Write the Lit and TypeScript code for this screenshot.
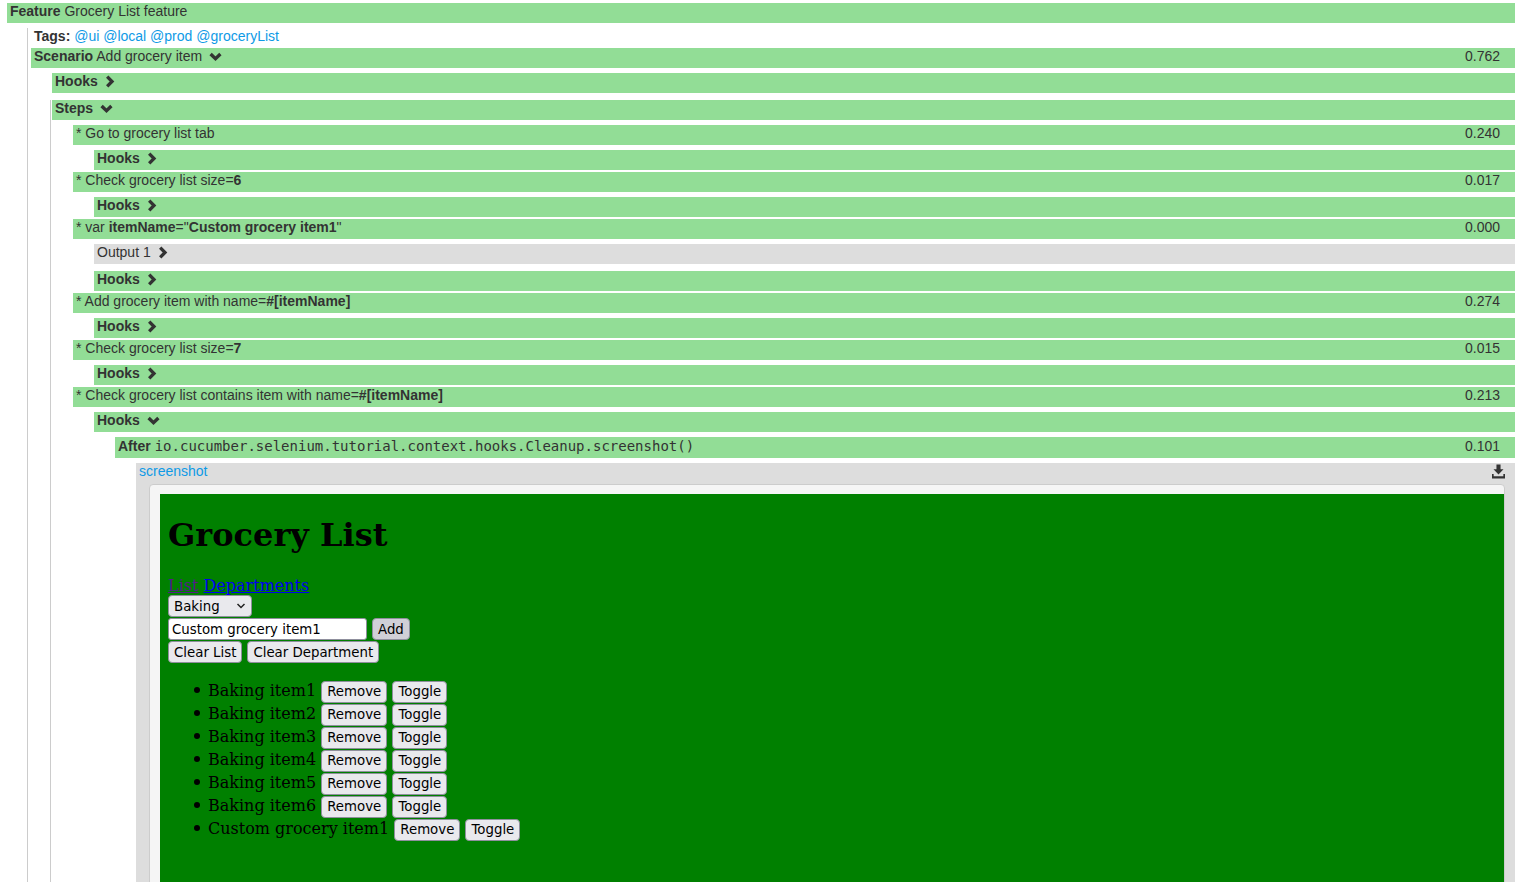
import { LitElement, html, css, nothing } from "lit";
import { customElement } from "lit/decorators.js";

const right = html`<svg class="chev r" viewBox="0 0 10 13" width="10" height="13"><polyline points="2.2,1.6 7,6.5 2.2,11.4" fill="none" stroke="#333" stroke-width="3.3"/></svg>`;
const down = html`<svg class="chev d" viewBox="0 0 13 10" width="13" height="10"><polyline points="1.6,2 6.5,6.8 11.4,2" fill="none" stroke="#333" stroke-width="3.3"/></svg>`;

interface Step { text: unknown; time: string; output?: boolean }

const steps: Step[] = [
  { text: html`* Go to grocery list tab`, time: "0.240" },
  { text: html`* Check grocery list size=<b>6</b>`, time: "0.017" },
  { text: html`* var <b>itemName</b>="<b>Custom grocery item1</b>"`, time: "0.000", output: true },
  { text: html`* Add grocery item with name=<b>#[itemName]</b>`, time: "0.274" },
  { text: html`* Check grocery list size=<b>7</b>`, time: "0.015" },
];

const items = ["Baking item1", "Baking item2", "Baking item3", "Baking item4", "Baking item5", "Baking item6", "Custom grocery item1"];

@customElement("app-root")
export class AppRoot extends LitElement {
  static styles = css`
    :host {
      display: block;
      height: 882px;
      overflow: hidden;
      font: 14px/20px "Liberation Sans", Arial, sans-serif;
      color: #333;
      background: #fff;
    }
    b { font-weight: 700; }
    a.tag { color: #0e9ae6; text-decoration: none; }
    .report { margin: 0 11px 0 7px; padding-top: 3px; }
    .bar {
      display: flex;
      justify-content: space-between;
      height: 20px;
      line-height: 17px;
      background: #92dd96;
      padding: 0 15px 0 3px;
    }
    .bar.grey { background: #ddd; }
    .bar .label { display: flex; align-items: flex-start; white-space: pre; }
    .chev { margin-left: 7px; }
    .chev.r { margin-top: 2px; }
    .chev.d { margin-top: 4px; }
    .tree { margin: 5px 0 0 20px; border-left: 1px solid #ccc; padding-left: 3px; }
    .tags { padding-left: 3px; height: 20px; line-height: 17px; }
    .sec { margin: 5px 0 2px; }
    .hooks-top { margin-left: 21px; }
    .steps-sec { margin-left: 19px; border-left: 1px solid #ccc; padding-left: 1px; margin-top: 7px; }
    .steps-body { margin-left: 21px; padding-top: 5px; }
    .sub { margin-left: 21px; }
    .out { margin-bottom: 7px; }
    .after { margin-bottom: 0; }
    .after .bar { height: 21px; line-height: 18px; }
    .mono { font-family: "DejaVu Sans Mono", monospace; font-size: 14px; margin-left: 4px; }
    .embed { margin: 5px 0 0 21px; background: #ddd; height: 500px; }
    .embed-head { display: flex; justify-content: space-between; height: 21px; line-height: 17px; padding: 0 10px 0 3px; }
    .dl { margin-top: 1px; }
    .pre {
      margin-left: 13px;
      margin-right: 10px;
      background: #f5f5f5;
      border: 1px solid #ccc;
      border-radius: 4px;
      padding: 9px 0 0 10px;
    }
    .page {
      height: 480px;
      background: #008000;
      color: #000;
      padding: 0 8px;
      font: 16px "DejaVu Serif", serif;
      overflow: hidden;
    }
    h1 { font-size: 32px; font-weight: 700; margin: 23.44px 0 21.44px; line-height: 37px; }
    .page a { text-decoration: underline; }
    .visited { color: #551a8b; }
    .link { color: #0000ee; }
    .nav { height: 19px; }
    .line { height: 23px; display: flex; align-items: center; gap: 5px; }
    button, input, .sel {
      box-sizing: border-box;
      font: 13.33px "DejaVu Sans", sans-serif;
      color: #000;
      height: 22px;
      border: 1px solid #8f8f9d;
      border-radius: 4px;
      background: #e9e9ed;
      padding: 0 5px;
      margin: 0;
    }
    button.hot { background: #d0d0d7; }
    input { background: #fff; width: 199px; padding: 0 3px; border-radius: 3px; }
    .selwrap { position: relative; display: inline-block; height: 22px; }
    .sel { appearance: none; width: 84px; display: block; }
    .selwrap svg { position: absolute; right: 6px; top: 8px; pointer-events: none; }
    ul { margin: 16px 0; padding: 0 0 0 40px; list-style: none; }
    li { height: 23px; line-height: 22px; position: relative; }
    li::before {
      content: "";
      position: absolute;
      left: -14.5px;
      top: 7px;
      width: 6px;
      height: 6px;
      border-radius: 50%;
      background: #000;
    }
    li button { vertical-align: top; margin-top: 1px; }
  `;

  private hooks(open = false) {
    return html`<div class="sec sub">
      <div class="bar"><span class="label"><b>Hooks</b>${open ? down : right}</span></div>
      ${open ? this.after() : nothing}
    </div>`;
  }

  private after() {
    return html`<div class="sub after sec">
      <div class="bar">
        <span class="label"><b>After</b><span class="mono">io.cucumber.selenium.tutorial.context.hooks.Cleanup.screenshot()</span></span>
        <span>0.101</span>
      </div>
      <div class="embed">
        <div class="embed-head">
          <a class="tag" href="#">screenshot</a>
          <svg class="dl" width="13" height="15" viewBox="0 0 14 15"><path fill="#333" d="M4.8 0h4.4v5h3.2L7 10.6 1.6 5h3.2z"/><path fill="#333" d="M0 10.2h1.8v2.3h10.4v-2.3H14V15H0z"/></svg>
        </div>
        <div class="pre">${this.page()}</div>
      </div>
    </div>`;
  }

  private page() {
    return html`<div class="page">
      <h1>Grocery List</h1>
      <div class="nav"><a class="visited" href="#">List</a> <a class="link" href="#">Departments</a></div>
      <div class="line">
        <span class="selwrap">
          <select class="sel"><option>Baking</option></select>
          <svg width="10" height="6" viewBox="0 0 10 6"><polyline points="1.5,1 5,4.5 8.5,1" fill="none" stroke="#222" stroke-width="1.5"/></svg>
        </span>
      </div>
      <div class="line"><input .value=${"Custom grocery item1"} /><button class="hot">Add</button></div>
      <div class="line"><button>Clear List</button><button>Clear Department</button></div>
      <ul>
        ${items.map((i) => html`<li>${i} <button>Remove</button> <button>Toggle</button></li>`)}
      </ul>
    </div>`;
  }

  render() {
    return html`<div class="report">
      <div class="bar"><span class="label"><b>Feature</b> Grocery List feature</span></div>
      <div class="tree">
        <div class="tags"><b>Tags:</b> <a class="tag" href="#">@ui</a> <a class="tag" href="#">@local</a> <a class="tag" href="#">@prod</a> <a class="tag" href="#">@groceryList</a></div>
        <div class="bar">
          <span class="label"><b>Scenario</b> Add grocery item${down}</span>
          <span>0.762</span>
        </div>
        <div class="sec hooks-top"><div class="bar"><span class="label"><b>Hooks</b>${right}</span></div></div>
        <div class="steps-sec">
          <div class="bar"><span class="label"><b>Steps</b>${down}</span></div>
          <div class="steps-body">
            ${steps.map((s) => html`
              <div class="bar"><span class="label">${s.text}</span><span>${s.time}</span></div>
              ${s.output ? html`<div class="sec sub out"><div class="bar grey"><span class="label">Output 1${right}</span></div></div>` : nothing}
              ${this.hooks()}
            `)}
            <div class="bar"><span class="label">* Check grocery list contains item with name=<b>#[itemName]</b></span><span>0.213</span></div>
            ${this.hooks(true)}
          </div>
        </div>
      </div>
    </div>`;
  }
}
